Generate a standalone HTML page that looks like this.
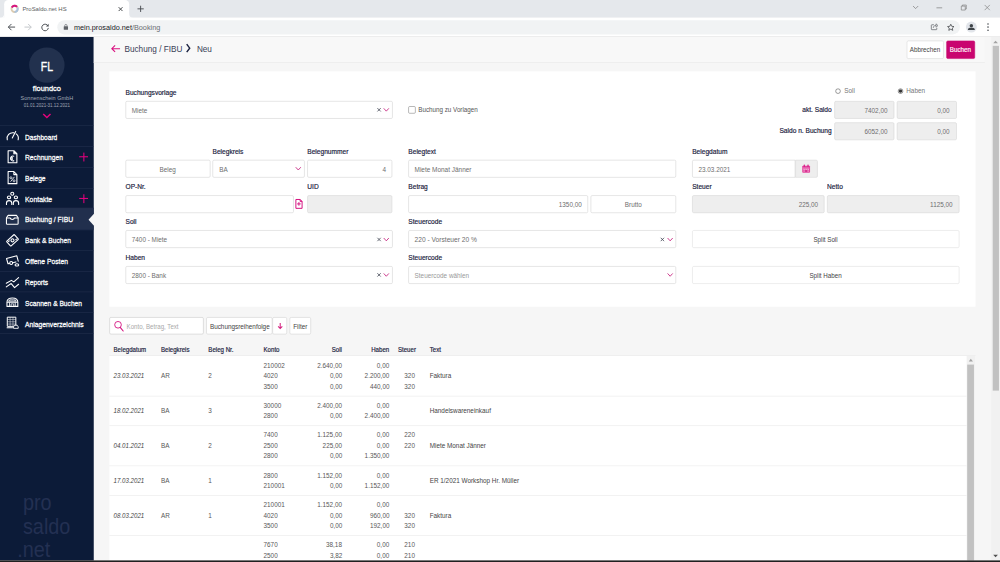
<!DOCTYPE html>
<html lang="de">
<head>
<meta charset="utf-8">
<title>ProSaldo.net HS</title>
<style>
html,body{margin:0;padding:0;width:1000px;height:562px;overflow:hidden;background:#f6f6f6}
body{font-family:"Liberation Sans",sans-serif;font-size:13px;color:#6e6e6e;position:relative}
#stage{position:absolute;left:0;top:0;width:1920px;height:1079px;transform:scale(.5208333);transform-origin:0 0;overflow:hidden;background:#f6f6f6}
#stage *{box-sizing:border-box}
.abs{position:absolute}
.t{position:absolute;white-space:nowrap;line-height:20px;height:20px;transform-origin:0 50%;transform:scaleX(.94)}
.tr{transform-origin:100% 50%;text-align:right}
.tc{transform-origin:50% 50%;text-align:center}
.lbl{font-weight:normal;-webkit-text-stroke:.34px #1b2240;color:#1b2240;transform:scaleX(.975)}
.dk{color:#444}
#tabs{left:0;top:0;width:1920px;height:34px;background:#e5e8ec}
#tab{left:8px;top:0;width:240px;height:36px;background:#fff;border-radius:8px 8px 0 0}
#tool{left:0;top:34px;width:1920px;height:37px;background:#fff;border-bottom:1px solid #dcdcdc}
#omni{left:110px;top:39px;width:1733px;height:27px;border-radius:14px;background:#f1f3f4}
#side{left:0;top:71px;width:180px;height:1005px;background:#0c1b38;overflow:hidden}
.mi{position:absolute;left:0;width:180px;height:40px;border-top:1px solid #253250}
.mi .t{left:47.5px;top:10.6px;color:#fff;font-weight:normal;-webkit-text-stroke:.5px #fff;font-size:15px;transform:scaleX(.84)}
.mi svg{position:absolute;left:11px;top:7px;width:26px;height:26px;overflow:visible}
.mi.act{background:#212f4d;border-top-color:#212f4d;margin-top:-1.5px;padding-top:1.5px;height:41.5px}
.plus{position:absolute;left:152px;top:11px;width:17px;height:17px}
.plus:before,.plus:after{content:"";position:absolute;background:#e5007d}
.plus:before{left:0;top:7.5px;width:17px;height:2px}
.plus:after{left:7.5px;top:0;width:2px;height:17px}
#hdr{left:180px;top:71px;width:1711px;height:50px;background:#f8f8f8;border-bottom:1px solid #e4e4e4}
.btn{position:absolute;height:34px;border:1px solid #d4d4d4;border-radius:3px;background:#fff}
.inp{position:absolute;height:34px;border:1px solid #cfcfcf;border-radius:3px;background:#fff}
.dis{background:#eee;border-color:#d2d2d2}
.card{left:210px;top:136.5px;width:1663px;height:452px;background:#fff}
#tbl{left:210px;top:682px;width:1663px;height:394px;background:#fff;border-top:1px solid #e2e2e2;overflow:hidden}
.row{position:absolute;left:0;width:1646px;border-top:1px solid #e4e4e4}
.it{font-style:italic;color:#444}
svg{position:absolute;overflow:visible}

.bt{border-color:#dcdcdc}
.mi.act .t{top:12.1px}
.mi.act svg{top:8.5px}
.tb{color:#585858}

</style>
</head>
<body>
<div id="stage">
<div class="abs" id="tabs"></div>
<div class="abs" id="tab"></div>
<svg style="left:0;top:26px" width="256" height="8" viewBox="0 0 256 8"><path d="M0 8 Q8 8 8 0 V8Z M256 8 Q248 8 248 0 V8Z" fill="#fff"/></svg>
<svg style="left:19px;top:8px" width="18" height="18" viewBox="0 0 18 18"><circle cx="9" cy="9" r="6" fill="none" stroke="#dccbb0" stroke-width="3.6"/><path d="M3.6 6.4 A6 6 0 0 1 13.6 5.1" fill="none" stroke="#d6137f" stroke-width="3.6"/><path d="M14.6 6.8 A6 6 0 0 1 9 15" fill="none" stroke="#a9c3df" stroke-width="3.6"/></svg>
<span class="t " style="left:43.4px;top:6.6px;font-size:12px;color:#5a5d62;transform:scaleX(.95)">ProSaldo.net HS</span>
<svg style="left:227px;top:12.5px" width="9" height="9" viewBox="0 0 11 11"><path d="M1 1 L10 10 M10 1 L1 10" stroke="#3c4043" stroke-width="2.2" fill="none"/></svg>
<svg style="left:263px;top:10px" width="14" height="14" viewBox="0 0 14 14"><path d="M7 1 V13 M1 7 H13" stroke="#4a4d52" stroke-width="1.8" fill="none"/></svg>
<svg style="left:1752px;top:10px" width="12" height="8" viewBox="0 0 12 8"><path d="M1 1.5 L6 6.5 L11 1.5" stroke="#777" stroke-width="1.3" fill="none"/></svg>
<svg style="left:1798px;top:13.5px" width="11" height="2" viewBox="0 0 11 2"><path d="M0 1 H11" stroke="#777" stroke-width="1.3"/></svg>
<svg style="left:1844.5px;top:8.5px" width="11" height="11" viewBox="0 0 11 11"><path d="M.7 2.7 H8.3 V10.3 H.7Z M2.7 2.7 V.7 H10.3 V8.3 H8.3" stroke="#777" stroke-width="1.2" fill="none"/></svg>
<svg style="left:1890px;top:8.5px" width="11" height="11" viewBox="0 0 11 11"><path d="M.5 .5 L10.5 10.5 M10.5 .5 L.5 10.5" stroke="#777" stroke-width="1.2" fill="none"/></svg>
<div class="abs" id="tool"></div>
<div class="abs" id="omni"></div>
<svg style="left:14px;top:44px" width="16" height="16" viewBox="0 0 16 16"><path d="M15 8 H2 M8 2 L2 8 L8 14" stroke="#4d5156" stroke-width="1.9" fill="none"/></svg>
<svg style="left:46px;top:44px" width="16" height="16" viewBox="0 0 16 16"><path d="M1 8 H14 M8 2 L14 8 L8 14" stroke="#c4c7cb" stroke-width="1.9" fill="none"/></svg>
<svg style="left:78px;top:43.5px" width="17" height="17" viewBox="0 0 17 17"><path d="M14.3 6.2 A6.3 6.3 0 1 0 14.8 9.6" stroke="#4d5156" stroke-width="1.9" fill="none"/><path d="M15.4 1.8 V7 H10.2Z" fill="#4d5156"/></svg>
<svg style="left:121.5px;top:46px" width="9" height="11.5" viewBox="0 0 11 14"><rect x=".5" y="5.5" width="10" height="8" rx="1.3" fill="#5f6368"/><path d="M2.8 6 V3.8 A2.7 2.7 0 0 1 8.2 3.8 V6" stroke="#5f6368" stroke-width="1.5" fill="none"/></svg>
<span class="t " style="left:142.0px;top:42.2px;font-size:14px;transform:scaleX(1.0)"><span style="color:#202124">mein.prosaldo.net</span><span style="color:#6a6e73">/Booking</span></span>
<svg style="left:1787px;top:44px" width="15" height="15" viewBox="0 0 17 17"><path d="M7 4 H2.5 A1.2 1.2 0 0 0 1.3 5.2 V13.5 A1.2 1.2 0 0 0 2.5 14.7 H12 A1.2 1.2 0 0 0 13.2 13.5 V11" stroke="#5f6368" stroke-width="1.6" fill="none"/><path d="M5.5 11 C5.5 7.5 8 5.3 11.5 5.3 M11.5 5.3 V2 L15.8 5.8 L11.5 9.4 V5.3" stroke="#5f6368" stroke-width="1.4" fill="none" stroke-linejoin="round"/></svg>
<svg style="left:1817.5px;top:44.5px" width="15" height="15" viewBox="0 0 18 18"><path d="M9 1.8 L11.2 6.6 L16.4 7.2 L12.5 10.7 L13.6 15.9 L9 13.3 L4.4 15.9 L5.5 10.7 L1.6 7.2 L6.8 6.6 Z" stroke="#44474b" stroke-width="1.8" fill="none" stroke-linejoin="round"/></svg>
<svg style="left:1854px;top:41px" width="22" height="22" viewBox="0 0 22 22"><circle cx="11" cy="11" r="10.5" fill="#e2e5ea"/><circle cx="11" cy="8.3" r="3.3" fill="#3f4449"/><path d="M4.3 16.2 C4.3 12.6 7.5 12.3 11 12.3 S17.7 12.6 17.7 16.2 V16.8 H4.3Z" fill="#3f4449"/></svg>
<svg style="left:1895px;top:44px" width="4" height="16" viewBox="0 0 4 16"><circle cx="2" cy="2" r="1.6" fill="#4d5156"/><circle cx="2" cy="8" r="1.6" fill="#4d5156"/><circle cx="2" cy="14" r="1.6" fill="#4d5156"/></svg>
<div class="abs" id="side">
<div class="abs" style="left:56px;top:19.8px;width:68px;height:68px;border-radius:50%;background:#22314e"></div>
<span class="t tc" style="left:0;width:180px;top:40.9px;height:30px;line-height:30px;font-size:25px;color:#fff;-webkit-text-stroke:.7px #fff;transform:scaleX(.8)">FL</span>
<span class="t tc" style="left:0;width:180px;top:88.7px;font-size:15px;color:#fff;-webkit-text-stroke:.55px #fff;transform:scaleX(.95)">floundco</span>
<span class="t tc" style="left:0;width:180px;top:106.6px;font-size:12px;color:#a0a6b4;transform:scaleX(.885)">Sonnenschein GmbH</span>
<span class="t tc" style="left:0;width:180px;top:121.2px;font-size:10px;color:#a0a6b4;transform:scaleX(.86)">01.01.2021-31.12.2021</span>
<svg style="left:82px;top:147.0px" width="16" height="9" viewBox="0 0 16 9"><path d="M1 .8 L8 7.6 L15 .8" stroke="#e0047c" stroke-width="2.9" fill="none"/></svg>
<div class="mi" style="top:170.0px"><svg viewBox="0 0 26 26"><path d="M2.97 19.4 A10.8 10.8 0 0 1 15.65 6.04 M20.05 8.09 A10.8 10.8 0 0 1 23.83 19.4" stroke="#fff" stroke-width="2.1" fill="none" stroke-linecap="round" stroke-linejoin="round"/><path d="M12.6 16 L19.1 3.3" stroke="#fff" stroke-width="2.1" fill="none" stroke-linecap="round" stroke-linejoin="round"/></svg><span class="t" style="transform:scaleX(0.845)">Dashboard</span></div>
<div class="mi" style="top:209.9px"><svg viewBox="0 0 26 26"><path d="M4.6 .4 H15.6 L21.4 6.2 V23.6 H4.6Z M15.6 .4 V6.2 H21.4" stroke="#fff" stroke-width="2.1" fill="none" stroke-linecap="round" stroke-linejoin="round"/><path d="M16.2 11.3 A4.6 4.6 0 1 0 16.2 19.2 M8.3 13.9 H14 M8.3 16.5 H14" stroke="#fff" stroke-width="2" fill="none"/></svg><span class="t" style="transform:scaleX(0.857)">Rechnungen</span><i class="plus"></i></div>
<div class="mi" style="top:249.9px"><svg viewBox="0 0 26 26"><path d="M4.6 .4 H15.6 L21.4 6.2 V23.6 H4.6Z M15.6 .4 V6.2 H21.4" stroke="#fff" stroke-width="2.1" fill="none" stroke-linecap="round" stroke-linejoin="round"/><path d="M9.3 19.8 L16.7 10.6" stroke="#fff" stroke-width="1.6" fill="none"/><circle cx="10" cy="12.3" r="1.9" stroke="#fff" stroke-width="1.4" fill="none"/><circle cx="16" cy="18.2" r="1.9" stroke="#fff" stroke-width="1.4" fill="none"/></svg><span class="t" style="transform:scaleX(0.842)">Belege</span></div>
<div class="mi" style="top:289.8px"><svg viewBox="0 0 26 26"><circle cx="12.6" cy="2.9" r="2.9" stroke="#fff" stroke-width="2.1" fill="none" stroke-linecap="round" stroke-linejoin="round"/><ellipse cx="6.3" cy="10" rx="3.1" ry="2.6" stroke="#fff" stroke-width="2.1" fill="none" stroke-linecap="round" stroke-linejoin="round"/><ellipse cx="19.5" cy="10" rx="3.1" ry="2.6" stroke="#fff" stroke-width="2.1" fill="none" stroke-linecap="round" stroke-linejoin="round"/><path d="M1.4 23.7 V21.3 A5.1 5.1 0 0 1 11.6 21.3 V23.7 M14.6 23.7 V21.3 A5.1 5.1 0 0 1 24.8 21.3 V23.7" stroke="#fff" stroke-width="2.1" fill="none" stroke-linecap="round" stroke-linejoin="round"/></svg><span class="t" style="transform:scaleX(0.881)">Kontakte</span><i class="plus"></i></div>
<div class="mi act" style="top:329.7px"><svg viewBox="0 0 26 26"><path d="M1.4 20 V9.2 L4.6 4.5 H20.6 L23.8 9.2 V20 A1.5 1.5 0 0 1 22.3 21.5 H2.9 A1.5 1.5 0 0 1 1.4 20Z" stroke="#fff" stroke-width="2.1" fill="none" stroke-linecap="round" stroke-linejoin="round"/><path d="M2 9.6 H8.4 C9.6 13.2 15.6 13.2 16.8 9.6 H23.2" stroke="#fff" stroke-width="2.1" fill="none" stroke-linecap="round" stroke-linejoin="round"/></svg><span class="t" style="transform:scaleX(0.873)">Buchung / FIBU</span></div>
<div class="mi" style="top:369.6px"><svg viewBox="0 0 26 26"><g transform="rotate(-42 13 12.4)"><rect x="3" y="6.2" width="20" height="12.4" rx="1" stroke="#fff" stroke-width="2.1" fill="none" stroke-linecap="round" stroke-linejoin="round"/><circle cx="13" cy="12.4" r="2.9" stroke="#fff" stroke-width="2.1" fill="none" stroke-linecap="round" stroke-linejoin="round"/><path d="M5.8 9 H7.6 M18.4 15.8 H20.2" stroke="#fff" stroke-width="2.1" fill="none" stroke-linecap="round" stroke-linejoin="round"/></g></svg><span class="t" style="transform:scaleX(0.854)">Bank &amp; Buchen</span></div>
<div class="mi" style="top:409.6px"><svg viewBox="0 0 26 26"><path d="M3.6 14.5 L1.4 7.2 L21.3 2.2 L24 12.4 M13.6 15.4 L19.5 13.9 M3.6 14.5 L4.4 17.4 L7.2 16.8" stroke="#fff" stroke-width="2.1" fill="none" stroke-linecap="round" stroke-linejoin="round"/><circle cx="10.5" cy="15.9" r="2.8" stroke="#fff" stroke-width="2.1" fill="none" stroke-linecap="round" stroke-linejoin="round"/><ellipse cx="21.4" cy="19.6" rx="3.5" ry="2.2" stroke="#fff" stroke-width="2.1" fill="none" stroke-linecap="round" stroke-linejoin="round"/></svg><span class="t" style="transform:scaleX(0.863)">Offene Posten</span></div>
<div class="mi" style="top:449.5px"><svg viewBox="0 0 26 26"><path d="M1.1 14.7 L10.8 9.3 L15.5 12.2 L24.7 3.9" stroke="#fff" stroke-width="2.1" fill="none" stroke-linecap="round" stroke-linejoin="round"/><path d="M1.1 21.8 L10.5 15.4 L17 23.1 L24.7 16.8" stroke="#fff" stroke-width="2.1" fill="none" stroke-linecap="round" stroke-linejoin="round"/></svg><span class="t" style="transform:scaleX(0.847)">Reports</span></div>
<div class="mi" style="top:489.4px"><svg viewBox="0 0 26 26"><path d="M2.4 12.5 C2.4 6 7 4.2 12.8 4.2 S23.2 6 23.2 12.5 V20.3 H2.4Z" stroke="#fff" stroke-width="2.1" fill="none" stroke-linecap="round" stroke-linejoin="round"/><path d="M4.2 11.6 C5 7.4 8.6 6.2 12.8 6.2 S20.6 7.4 21.4 11.6Z" fill="#fff" fill-opacity=".8"/><path d="M2.4 12.5 H23.2 M7.4 12.5 V20.3 M18.2 12.5 V20.3" stroke="#fff" stroke-width="1.7" fill="none"/><path d="M10.3 20.3 V15.4 H15.3 V20.3" stroke="#fff" stroke-width="1.5" fill="none"/><path d="M9.2 8.9 C10.6 7.9 15 7.9 16.4 8.9" stroke="#0c1b38" stroke-width="1.3" fill="none"/></svg><span class="t" style="transform:scaleX(0.852)">Scannen &amp; Buchen</span></div>
<div class="mi" style="top:529.4px"><svg viewBox="0 0 26 26"><path d="M3 1 H19.4 V18.6 H3Z" stroke="#fff" stroke-width="1.9" fill="none"/><path d="M8.4 1 V18.6 M13.9 1 V18.6 M3 5.4 H19.4 M3 9.8 H19.4 M3 14.2 H19.4" stroke="#fff" stroke-width="1.2" stroke-opacity=".75" fill="none"/><path d="M2.6 21.2 H13" stroke="#fff" stroke-width="2.1" fill="none" stroke-linecap="round" stroke-linejoin="round"/><path d="M15 22.4 V19.6 L16.8 16.4 H22 L24 19.6 V22.4 Z" fill="#0c1b38" stroke="#fff" stroke-width="1.7" stroke-linejoin="round"/></svg><span class="t" style="transform:scaleX(0.866)">Anlagenverzeichnis</span></div>
<div class="mi" style="top:569.3px;height:1px"></div>
<span class="t" style="left:44px;top:869.0px;height:50px;line-height:50px;font-size:41px;color:#233052;transform:scaleX(.93)">pro</span>
<span class="t" style="left:44px;top:915.0px;height:50px;line-height:50px;font-size:41px;color:#233052;transform:scaleX(.93)">saldo</span>
<span class="t" style="left:32.6px;top:959.5px;height:50px;line-height:50px;font-size:41px;color:#233052;transform:scaleX(.93)">.net</span>
</div>
<svg style="left:168px;top:410.5px" width="14" height="22" viewBox="0 0 14 22"><path d="M14 0 H12 L2 11 L12 22 H14Z" fill="#f6f6f6"/></svg>
<div class="abs" id="hdr"></div>
<svg style="left:213px;top:86px" width="18" height="15" viewBox="0 0 18 15"><path d="M17.5 7.5 H2 M8 1.2 L1.7 7.5 L8 13.8" stroke="#d9107f" stroke-width="2.1" fill="none"/></svg>
<span class="t " style="left:239.2px;top:83.6px;font-size:18px;color:#3a4157;transform:scaleX(.875)">Buchung / FIBU</span>
<svg style="left:356.5px;top:83.5px" width="9" height="17" viewBox="0 0 9 17"><path d="M1.5 .8 L7.2 8.5 L1.5 16.2" stroke="#1b2240" stroke-width="2.8" fill="none"/></svg>
<span class="t " style="left:378.2px;top:83.6px;font-size:18px;color:#3a4157;transform:scaleX(.875)">Neu</span>
<div class="btn" style="left:1740.5px;top:78px;width:71px;height:34.5px"></div>
<span class="t tc dk" style="left:1726.0px;width:100px;top:85.0px;transform:scaleX(.93)">Abbrechen</span>
<div class="btn" style="left:1817.3px;top:78px;width:55.2px;height:34.5px;background:#c9056f;border-color:#c9056f"></div>
<span class="t tc " style="left:1794.2px;width:100px;top:85.0px;color:#fff;-webkit-text-stroke:.3px #fff;transform:scaleX(.92)">Buchen</span>
<div class="abs" style="left:1903px;top:71px;width:17px;height:1005px;background:#f1f1f1"></div>
<div class="abs" style="left:1905.5px;top:88px;width:12.2px;height:661.5px;background:#c1c1c1"></div>
<svg style="left:1907px;top:78px" width="9" height="5" viewBox="0 0 9 5"><path d="M0 5 L4.5 0 L9 5Z" fill="#a3a3a3"/></svg>
<svg style="left:1907px;top:1065px" width="9" height="5" viewBox="0 0 9 5"><path d="M0 0 L4.5 5 L9 0Z" fill="#505050"/></svg>
<div class="abs card"></div>
<span class="t lbl" style="left:240.5px;top:168.6px;">Buchungsvorlage</span>
<div class="inp " style="left:240.5px;top:194.0px;width:513.0px;height:34px"></div>
<span class="t " style="left:252.8px;top:202.6px;">Miete</span>
<svg style="left:723.9px;top:207.4px" width="7.6" height="7.6" viewBox="0 0 7.6 7.6"><path d="M.6 .6 L7 7 M7 .6 L.6 7" stroke="#3c4250" stroke-width="1.5" fill="none"/></svg>
<svg style="left:736.1px;top:207.4px" width="11.4" height="8" viewBox="0 0 11.4 8"><path d="M.8 1 L5.7 6.4 L10.6 1" stroke="#c41b7a" stroke-width="1.6" fill="none"/></svg>
<div class="abs" style="left:784px;top:204.3px;width:13.6px;height:13.6px;border:1.2px solid #767676;border-radius:2.5px;background:#fff"></div>
<span class="t " style="left:802.6px;top:201.4px;color:#555;transform:scaleX(.925)">Buchung zu Vorlagen</span>
<div class="abs" style="left:1603.8px;top:169.5px;width:10.6px;height:10.6px;border:1.3px solid #444;border-radius:50%;background:#fff"></div>
<span class="t " style="left:1620.5px;top:165.2px;color:#777">Soll</span>
<div class="abs" style="left:1723.8px;top:169.5px;width:10.6px;height:10.6px;border:1.2px solid #333;border-radius:50%;background:#fff"></div>
<div class="abs" style="left:1726.3px;top:172px;width:5.6px;height:5.6px;border-radius:50%;background:#333"></div>
<span class="t " style="left:1740.3px;top:165.2px;color:#777">Haben</span>
<span class="t tr lbl" style="right:323.3px;top:202.4px;">akt. Saldo</span>
<span class="t tr lbl" style="right:323.3px;top:241.4px;">Saldo n. Buchung</span>
<div class="inp dis" style="left:1602.0px;top:194.3px;width:114.5px;height:34px"></div>
<span class="t tr " style="right:216.5px;top:202.9px;">7402,00</span>
<div class="inp dis" style="left:1722.0px;top:194.3px;width:114.7px;height:34px"></div>
<span class="t tr " style="right:96.3px;top:202.9px;">0,00</span>
<div class="inp dis" style="left:1602.0px;top:234.5px;width:114.5px;height:34px"></div>
<span class="t tr " style="right:216.5px;top:243.1px;">6052,00</span>
<div class="inp dis" style="left:1722.0px;top:234.5px;width:114.7px;height:34px"></div>
<span class="t tr " style="right:96.3px;top:243.1px;">0,00</span>
<span class="t lbl" style="left:408.2px;top:281.6px;">Belegkreis</span>
<span class="t lbl" style="left:590.2px;top:281.6px;">Belegnummer</span>
<span class="t lbl" style="left:783.8px;top:281.6px;">Belegtext</span>
<span class="t lbl" style="left:1328.6px;top:281.6px;">Belegdatum</span>
<div class="inp " style="left:240.5px;top:307.0px;width:163.1px;height:34px"></div>
<span class="t tc " style="left:262.1px;width:120px;top:315.6px;">Beleg</span>
<div class="inp " style="left:408.2px;top:307.0px;width:176.6px;height:34px"></div>
<span class="t " style="left:420.5px;top:315.6px;">BA</span>
<svg style="left:567.4px;top:320.4px" width="11.4" height="8" viewBox="0 0 11.4 8"><path d="M.8 1 L5.7 6.4 L10.6 1" stroke="#c41b7a" stroke-width="1.6" fill="none"/></svg>
<div class="inp " style="left:590.2px;top:307.0px;width:163.3px;height:34px"></div>
<span class="t tr " style="right:1178.8px;top:315.6px;">4</span>
<div class="inp " style="left:783.8px;top:307.0px;width:514.2px;height:34px"></div>
<span class="t " style="left:796.1px;top:315.6px;transform:scaleX(.95)">Miete Monat Jänner</span>
<div class="inp" style="left:1328.6px;top:307px;width:198.9000000000001px;height:34px;border-radius:3px 0 0 3px"></div>
<span class="t " style="left:1341.3px;top:315.6px;">23.03.2021</span>
<div class="inp dis" style="left:1526.5px;top:307px;width:43px;height:34px;border-radius:0 3px 3px 0"></div>
<svg style="left:1540px;top:315.5px" width="15.5" height="16" viewBox="0 0 15.5 16"><rect x=".3" y="2.2" width="15" height="13.5" rx="1.6" fill="#e2429d"/><rect x="3" y="0" width="2.4" height="4.5" rx=".8" fill="#d81b86"/><rect x="10.2" y="0" width="2.4" height="4.5" rx=".8" fill="#d81b86"/><path d="M1.5 6.8 H14" stroke="#f4b5d8" stroke-width="1.2"/><path d="M2.6 9.3 H5.2 M6.5 9.3 H9.1 M10.4 9.3 H13 M2.6 12.4 H5.2 M10.4 12.4 H13" stroke="#fbe3f0" stroke-width="1.5"/><path d="M6.5 12.4 H9.1" stroke="#c2187a" stroke-width="1.5"/></svg>
<span class="t lbl" style="left:240.5px;top:349.3px;">OP-Nr.</span>
<span class="t lbl" style="left:590.2px;top:349.3px;">UID</span>
<span class="t lbl" style="left:783.8px;top:349.3px;">Betrag</span>
<span class="t lbl" style="left:1328.6px;top:349.3px;">Steuer</span>
<span class="t lbl" style="left:1587.8px;top:349.3px;">Netto</span>
<div class="inp " style="left:240.5px;top:374.7px;width:323.2px;height:34px"></div>
<svg style="left:567px;top:382.2px" width="14" height="19" viewBox="0 0 14 19"><path d="M1.1 1 H9.3 L13 4.7 V18 H1.1Z M9.3 1 V4.7 H13" stroke="#d4117f" stroke-width="1.9" fill="none" stroke-linejoin="round"/><path d="M6.9 6 V13 M3.4 9.5 H10.4" stroke="#d4117f" stroke-width="1.8" fill="none"/></svg>
<div class="inp dis" style="left:590.2px;top:374.7px;width:163.3px;height:34px"></div>
<div class="inp " style="left:783.8px;top:374.7px;width:344.8px;height:34px"></div>
<span class="t tr " style="right:803.4px;top:383.3px;">1350,00</span>
<div class="inp " style="left:1133.6px;top:374.7px;width:164.4px;height:34px"></div>
<span class="t tc " style="left:1155.8px;width:120px;top:383.3px;">Brutto</span>
<div class="inp dis" style="left:1328.6px;top:374.7px;width:254.2px;height:34px"></div>
<span class="t tr " style="right:349.5px;top:383.3px;">225,00</span>
<div class="inp dis" style="left:1587.8px;top:374.7px;width:254.2px;height:34px"></div>
<span class="t tr " style="right:91.0px;top:383.3px;">1125,00</span>
<span class="t lbl" style="left:240.5px;top:416.8px;">Soll</span>
<span class="t lbl" style="left:783.8px;top:416.8px;">Steuercode</span>
<div class="inp " style="left:240.5px;top:442.2px;width:513.0px;height:34px"></div>
<span class="t " style="left:252.8px;top:450.8px;">7400 - Miete</span>
<svg style="left:723.9px;top:455.6px" width="7.6" height="7.6" viewBox="0 0 7.6 7.6"><path d="M.6 .6 L7 7 M7 .6 L.6 7" stroke="#3c4250" stroke-width="1.5" fill="none"/></svg>
<svg style="left:736.1px;top:455.6px" width="11.4" height="8" viewBox="0 0 11.4 8"><path d="M.8 1 L5.7 6.4 L10.6 1" stroke="#c41b7a" stroke-width="1.6" fill="none"/></svg>
<div class="inp " style="left:783.8px;top:442.2px;width:514.2px;height:34px"></div>
<span class="t " style="left:796.1px;top:450.8px;transform:scaleX(.98)">220 - Vorsteuer 20 %</span>
<svg style="left:1268.4px;top:455.6px" width="7.6" height="7.6" viewBox="0 0 7.6 7.6"><path d="M.6 .6 L7 7 M7 .6 L.6 7" stroke="#3c4250" stroke-width="1.5" fill="none"/></svg>
<svg style="left:1280.6px;top:455.6px" width="11.4" height="8" viewBox="0 0 11.4 8"><path d="M.8 1 L5.7 6.4 L10.6 1" stroke="#c41b7a" stroke-width="1.6" fill="none"/></svg>
<div class="inp bt" style="left:1328.6px;top:442.2px;width:513.4px;height:34px"></div>
<span class="t tc dk" style="left:1485.3px;width:200px;top:450.8px;transform:scaleX(.92)">Split Soll</span>
<span class="t lbl" style="left:240.5px;top:485.6px;">Haben</span>
<span class="t lbl" style="left:783.8px;top:485.6px;">Steuercode</span>
<div class="inp " style="left:240.5px;top:511.0px;width:513.0px;height:34px"></div>
<span class="t " style="left:252.8px;top:519.6px;">2800 - Bank</span>
<svg style="left:723.9px;top:524.4px" width="7.6" height="7.6" viewBox="0 0 7.6 7.6"><path d="M.6 .6 L7 7 M7 .6 L.6 7" stroke="#3c4250" stroke-width="1.5" fill="none"/></svg>
<svg style="left:736.1px;top:524.4px" width="11.4" height="8" viewBox="0 0 11.4 8"><path d="M.8 1 L5.7 6.4 L10.6 1" stroke="#c41b7a" stroke-width="1.6" fill="none"/></svg>
<div class="inp " style="left:783.8px;top:511.0px;width:514.2px;height:34px"></div>
<span class="t " style="left:796.1px;top:519.6px;color:#999">Steuercode wählen</span>
<svg style="left:1280.6px;top:524.4px" width="11.4" height="8" viewBox="0 0 11.4 8"><path d="M.8 1 L5.7 6.4 L10.6 1" stroke="#c41b7a" stroke-width="1.6" fill="none"/></svg>
<div class="inp bt" style="left:1328.6px;top:511.0px;width:513.4px;height:34px"></div>
<span class="t tc dk" style="left:1485.3px;width:200px;top:519.6px;transform:scaleX(.92)">Split Haben</span>
<div class="inp" style="left:210px;top:609.4px;width:181px;height:33px;border-color:#c6c6c6"></div>
<svg style="left:218.5px;top:616.4px" width="19" height="21" viewBox="0 0 19 21"><circle cx="7.6" cy="7.6" r="6.4" stroke="#d4117f" stroke-width="1.7" fill="none"/><path d="M11.8 12.6 L17.5 19.5" stroke="#d4117f" stroke-width="2.1" fill="none" stroke-linecap="round"/></svg>
<span class="t " style="left:243.0px;top:617.2px;color:#a9a9a9;transform:scaleX(.905)">Konto, Betrag, Text</span>
<div class="inp " style="left:396.3px;top:609.4px;width:127.2px;height:33px"></div>
<span class="t dk" style="left:402.6px;top:617.2px;">Buchungsreihenfolge</span>
<div class="inp " style="left:522.5px;top:609.4px;width:28.5px;height:33px"></div>
<svg style="left:532.5px;top:619.9px" width="10" height="12" viewBox="0 0 10 12"><path d="M5 0 V10.5 M1 6.8 L5 10.8 L9 6.8" stroke="#d4217f" stroke-width="2" fill="none"/></svg>
<div class="inp " style="left:555.8px;top:609.4px;width:41.7px;height:33px"></div>
<span class="t dk" style="left:562.8px;top:617.2px;">Filter</span>
<span class="t lbl" style="left:218.0px;top:661.3px;font-size:12.3px;transform:scaleX(.955)">Belegdatum</span>
<span class="t lbl" style="left:309.0px;top:661.3px;font-size:12.3px;transform:scaleX(.955)">Belegkreis</span>
<span class="t lbl" style="left:400.0px;top:661.3px;font-size:12.3px;transform:scaleX(.955)">Beleg Nr.</span>
<span class="t lbl" style="left:506.0px;top:661.3px;font-size:12.3px;transform:scaleX(.955)">Konto</span>
<span class="t lbl" style="left:764.0px;top:661.3px;font-size:12.3px;transform:scaleX(.955)">Steuer</span>
<span class="t lbl" style="left:825.0px;top:661.3px;font-size:12.3px;transform:scaleX(.955)">Text</span>
<span class="t tr lbl" style="right:1263.0px;top:661.3px;font-size:12.3px;transform:scaleX(.955)">Soll</span>
<span class="t tr lbl" style="right:1172.7px;top:661.3px;font-size:12.3px;transform:scaleX(.955)">Haben</span>
<div class="abs" id="tbl"></div>
<span class="t it" style="left:218.0px;top:711.5px;transform:scaleX(.905)">23.03.2021</span>
<span class="t tb" style="left:309.0px;top:711.5px;">AR</span>
<span class="t tb" style="left:400.0px;top:711.5px;">2</span>
<span class="t dk" style="left:825.0px;top:711.5px;">Faktura</span>
<span class="t tb" style="left:506.0px;top:691.5px;">210002</span>
<span class="t tr tb" style="right:1263.0px;top:691.5px;">2.640,00</span>
<span class="t tr tb" style="right:1172.7px;top:691.5px;">0,00</span>
<span class="t tb" style="left:506.0px;top:711.5px;">4020</span>
<span class="t tr tb" style="right:1263.0px;top:711.5px;">0,00</span>
<span class="t tr tb" style="right:1172.7px;top:711.5px;">2.200,00</span>
<span class="t tr tb" style="right:1123.0px;top:711.5px;">320</span>
<span class="t tb" style="left:506.0px;top:731.5px;">3500</span>
<span class="t tr tb" style="right:1263.0px;top:731.5px;">0,00</span>
<span class="t tr tb" style="right:1172.7px;top:731.5px;">440,00</span>
<span class="t tr tb" style="right:1123.0px;top:731.5px;">320</span>
<div class="abs" style="left:210px;top:759.5px;width:1646px;height:1px;background:#e6e6e6"></div>
<span class="t it" style="left:218.0px;top:778.5px;transform:scaleX(.905)">18.02.2021</span>
<span class="t tb" style="left:309.0px;top:778.5px;">BA</span>
<span class="t tb" style="left:400.0px;top:778.5px;">3</span>
<span class="t dk" style="left:825.0px;top:778.5px;">Handelswareneinkauf</span>
<span class="t tb" style="left:506.0px;top:768.5px;">30000</span>
<span class="t tr tb" style="right:1263.0px;top:768.5px;">2.400,00</span>
<span class="t tr tb" style="right:1172.7px;top:768.5px;">0,00</span>
<span class="t tb" style="left:506.0px;top:788.5px;">2800</span>
<span class="t tr tb" style="right:1263.0px;top:788.5px;">0,00</span>
<span class="t tr tb" style="right:1172.7px;top:788.5px;">2.400,00</span>
<div class="abs" style="left:210px;top:816.5px;width:1646px;height:1px;background:#e6e6e6"></div>
<span class="t it" style="left:218.0px;top:845.5px;transform:scaleX(.905)">04.01.2021</span>
<span class="t tb" style="left:309.0px;top:845.5px;">BA</span>
<span class="t tb" style="left:400.0px;top:845.5px;">2</span>
<span class="t dk" style="left:825.0px;top:845.5px;">Miete Monat Jänner</span>
<span class="t tb" style="left:506.0px;top:825.5px;">7400</span>
<span class="t tr tb" style="right:1263.0px;top:825.5px;">1.125,00</span>
<span class="t tr tb" style="right:1172.7px;top:825.5px;">0,00</span>
<span class="t tr tb" style="right:1123.0px;top:825.5px;">220</span>
<span class="t tb" style="left:506.0px;top:845.5px;">2500</span>
<span class="t tr tb" style="right:1263.0px;top:845.5px;">225,00</span>
<span class="t tr tb" style="right:1172.7px;top:845.5px;">0,00</span>
<span class="t tr tb" style="right:1123.0px;top:845.5px;">220</span>
<span class="t tb" style="left:506.0px;top:865.5px;">2800</span>
<span class="t tr tb" style="right:1263.0px;top:865.5px;">0,00</span>
<span class="t tr tb" style="right:1172.7px;top:865.5px;">1.350,00</span>
<div class="abs" style="left:210px;top:893.5px;width:1646px;height:1px;background:#e6e6e6"></div>
<span class="t it" style="left:218.0px;top:912.5px;transform:scaleX(.905)">17.03.2021</span>
<span class="t tb" style="left:309.0px;top:912.5px;">BA</span>
<span class="t tb" style="left:400.0px;top:912.5px;">1</span>
<span class="t dk" style="left:825.0px;top:912.5px;">ER 1/2021 Workshop Hr. Müller</span>
<span class="t tb" style="left:506.0px;top:902.5px;">2800</span>
<span class="t tr tb" style="right:1263.0px;top:902.5px;">1.152,00</span>
<span class="t tr tb" style="right:1172.7px;top:902.5px;">0,00</span>
<span class="t tb" style="left:506.0px;top:922.5px;">210001</span>
<span class="t tr tb" style="right:1263.0px;top:922.5px;">0,00</span>
<span class="t tr tb" style="right:1172.7px;top:922.5px;">1.152,00</span>
<div class="abs" style="left:210px;top:950.5px;width:1646px;height:1px;background:#e6e6e6"></div>
<span class="t it" style="left:218.0px;top:979.5px;transform:scaleX(.905)">08.03.2021</span>
<span class="t tb" style="left:309.0px;top:979.5px;">AR</span>
<span class="t tb" style="left:400.0px;top:979.5px;">1</span>
<span class="t dk" style="left:825.0px;top:979.5px;">Faktura</span>
<span class="t tb" style="left:506.0px;top:959.5px;">210001</span>
<span class="t tr tb" style="right:1263.0px;top:959.5px;">1.152,00</span>
<span class="t tr tb" style="right:1172.7px;top:959.5px;">0,00</span>
<span class="t tb" style="left:506.0px;top:979.5px;">4020</span>
<span class="t tr tb" style="right:1263.0px;top:979.5px;">0,00</span>
<span class="t tr tb" style="right:1172.7px;top:979.5px;">960,00</span>
<span class="t tr tb" style="right:1123.0px;top:979.5px;">320</span>
<span class="t tb" style="left:506.0px;top:999.5px;">3500</span>
<span class="t tr tb" style="right:1263.0px;top:999.5px;">0,00</span>
<span class="t tr tb" style="right:1172.7px;top:999.5px;">192,00</span>
<span class="t tr tb" style="right:1123.0px;top:999.5px;">320</span>
<div class="abs" style="left:210px;top:1027.5px;width:1646px;height:1px;background:#e6e6e6"></div>
<span class="t tb" style="left:506.0px;top:1036.5px;">7670</span>
<span class="t tr tb" style="right:1263.0px;top:1036.5px;">38,18</span>
<span class="t tr tb" style="right:1172.7px;top:1036.5px;">0,00</span>
<span class="t tr tb" style="right:1123.0px;top:1036.5px;">210</span>
<span class="t tb" style="left:506.0px;top:1056.5px;">2500</span>
<span class="t tr tb" style="right:1263.0px;top:1056.5px;">3,82</span>
<span class="t tr tb" style="right:1172.7px;top:1056.5px;">0,00</span>
<span class="t tr tb" style="right:1123.0px;top:1056.5px;">210</span>
<div class="abs" style="left:1855.5px;top:683px;width:17px;height:393px;background:#f1f1f1"></div>
<div class="abs" style="left:1856.6px;top:700px;width:13px;height:376px;background:#c1c1c1"></div>
<svg style="left:1859.5px;top:689px" width="8" height="5" viewBox="0 0 8 5"><path d="M0 5 L4 0 L8 5Z" fill="#a3a3a3"/></svg>
<div class="abs" style="left:0;top:1076.4px;width:1920px;height:3px;background:#1e1e1e"></div>
</div>
</body>
</html>
